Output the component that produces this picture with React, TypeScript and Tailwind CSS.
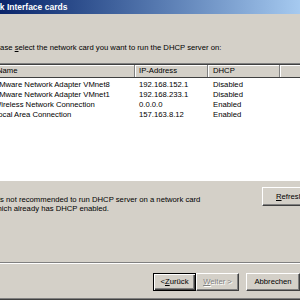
const rows = [
  { name: "VMware Network Adapter VMnet8", ip: "192.168.152.1", dhcp: "Disabled" },
  { name: "VMware Network Adapter VMnet1", ip: "192.168.233.1", dhcp: "Disabled" },
  { name: "Wireless Network Connection", ip: "0.0.0.0", dhcp: "Enabled" },
  { name: "Local Area Connection", ip: "157.163.8.12", dhcp: "Enabled" },
];

const raised =
  "border border-t-white border-l-white border-r-[#404040] border-b-[#404040] shadow-[inset_-1px_-1px_0_#808080]";

export default function App() {
  return (
    <div className="w-[300px] h-[300px] overflow-hidden bg-[#d4d0c8] text-black font-['Liberation_Sans',Arial,sans-serif] text-[7.7px] leading-[10px]">
      {/* title bar */}
      <div className="h-[14px] bg-gradient-to-r from-[#0a246a] to-[#a6caf0] flex items-center">
        <span className="ml-[-29px] whitespace-nowrap text-white font-bold text-[8.5px]">
          Network Interface cards
        </span>
      </div>

      <div className="h-[248px] flex flex-col">
        <p className="mt-[29px] ml-[-11px] whitespace-nowrap">
          Please <u>s</u>elect the network card you want to run the DHCP server on:
        </p>

        {/* list view */}
        <div className="mt-[10px] ml-[-14px] w-[340px] h-[118px] bg-white border-t border-l border-[#808080] shadow-[inset_1px_1px_0_#404040] pt-[1px] pl-[1px]">
          <div className="flex h-[13px] bg-[#d4d0c8] border-b border-[#404040]">
            <div className="w-[147px] pl-[9px] border-r border-[#808080] shadow-[inset_1px_1px_0_#fff] flex items-center">Name</div>
            <div className="w-[73px] pl-[4px] border-r border-[#808080] shadow-[inset_1px_1px_0_#fff] flex items-center">IP-Address</div>
            <div className="w-[72px] pl-[5px] border-r border-[#808080] shadow-[inset_1px_1px_0_#fff] flex items-center">DHCP</div>
            <div className="flex-1 shadow-[inset_1px_1px_0_#fff]" />
          </div>
          <div className="pt-[2px]">
            {rows.map((r) => (
              <div key={r.name} className="flex h-[10px] items-center whitespace-nowrap">
                <div className="w-[147px] pl-[6px]">{r.name}</div>
                <div className="w-[73px] pl-[4px]">{r.ip}</div>
                <div className="w-[72px] pl-[5px]">{r.dhcp}</div>
              </div>
            ))}
          </div>
        </div>

        <div className="flex">
          <div className="ml-[-8px] mt-[14px] w-[270px] whitespace-nowrap leading-[9px]">
            <p>It is not recommended to run DHCP server on a network card</p>
            <p>which already has DHCP enabled.</p>
          </div>
          <button className={`mt-[6px] ml-auto mr-[-20px] w-[58px] h-[19px] ${raised} text-left pl-[13px]`}>
            <u>R</u>efresh
          </button>
        </div>
      </div>

      {/* separator */}
      <div className="h-[2px] border-t border-[#808080] border-b border-b-white" />

      <div className="flex h-[34px] pt-[9px] pl-[153px]">
        <button className="w-[54px] h-[18px] border border-black shadow-[inset_1px_1px_0_#fff,inset_-1px_-1px_0_#404040,inset_-2px_-2px_0_#808080] flex items-center justify-center">
          &lt; <u>Z</u>urück
        </button>
        <button className={`w-[54px] h-[18px] ${raised} text-[#808080] flex items-center justify-center`}>
          <span className="[text-shadow:1px_1px_0_#fff]">
            <u>W</u>eiter &gt;
          </span>
        </button>
        <button className={`ml-[7px] w-[54px] h-[18px] shrink-0 ${raised} flex items-center justify-center`}>
          Abbrechen
        </button>
      </div>
      <div className="h-[1px] bg-[#808080]" />
      <div className="h-[1px] bg-[#404040]" />
    </div>
  );
}
